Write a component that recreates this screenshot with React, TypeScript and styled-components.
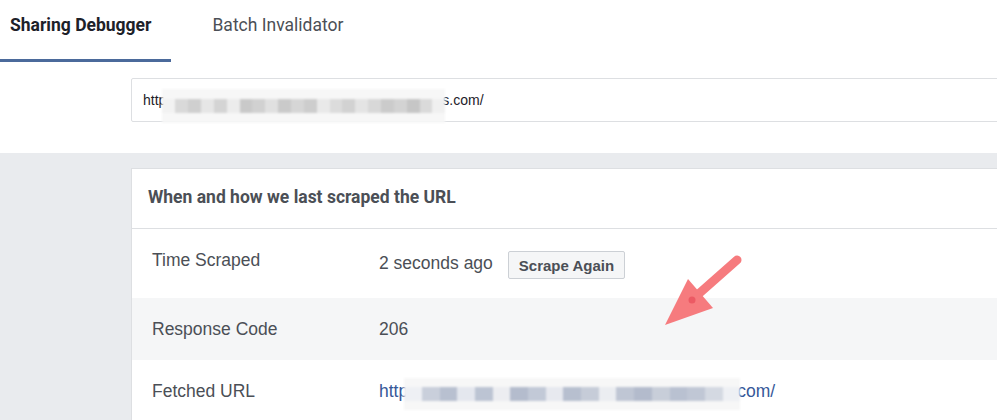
import React from 'react';
import styled, { createGlobalStyle } from 'styled-components';

const GlobalStyle = createGlobalStyle`
  html, body {
    margin: 0;
    padding: 0;
    background: #fff;
    overflow: hidden;
  }
  body {
    font-family: 'Liberation Sans', Arial, sans-serif;
    color: #4b4f56;
  }
`;

const Page = styled.div`
  position: relative;
  width: 997px;
  height: 420px;
  overflow: hidden;
`;

const TabBar = styled.div`
  display: flex;
  gap: 21px;
  margin-left: -10px;
  height: 62px;
`;

const Tab = styled.div<{ $active?: boolean }>`
  box-sizing: border-box;
  height: 62px;
  padding: 15px 20px 0;
  font-family: Roboto, 'Liberation Sans', sans-serif;
  font-size: 17.5px;
  line-height: 20px;
  font-weight: ${p => (p.$active ? 700 : 400)};
  color: ${p => (p.$active ? '#1d2129' : '#4b4f56')};
  border-bottom: 3px solid ${p => (p.$active ? '#4b6a9b' : 'transparent')};
`;

const UrlSection = styled.div`
  padding: 16px 0 31px 131px;
`;

const UrlInput = styled.div`
  box-sizing: border-box;
  height: 44px;
  margin-right: -10px;
  padding: 0 11px;
  display: flex;
  align-items: center;
  border: 1px solid #dddfe2;
  border-radius: 2px;
  font-size: 14px;
  color: #1d2129;
  white-space: nowrap;
`;

const Main = styled.div`
  background: #e9ebee;
  padding: 15px 0 0 131px;
  min-height: 260px;
`;

const Card = styled.div`
  background: #fff;
  border: 1px solid #dddfe2;
  border-right: none;
  margin-right: -10px;
`;

const CardHeader = styled.div`
  box-sizing: border-box;
  height: 60px;
  padding: 0 16px 4px;
  display: flex;
  align-items: center;
  font-family: Roboto, 'Liberation Sans', sans-serif;
  font-size: 17.5px;
  font-weight: 700;
  color: #4b4f56;
  border-bottom: 1px solid #dddfe2;
`;

const Row = styled.div<{ $shaded?: boolean }>`
  box-sizing: border-box;
  display: grid;
  grid-template-columns: 227px 1fr;
  align-items: center;
  padding: 0 20px;
  min-height: ${p => (p.$shaded ? 62 : 61)}px;
  background: ${p => (p.$shaded ? '#f5f6f7' : '#fff')};
  font-size: 17.5px;
  line-height: 20px;
`;

const TallRow = styled(Row)`
  min-height: 69px;
  align-items: start;
  padding-top: 21px;
`;

const Label = styled.div`
  color: #4b4f56;
`;

const Value = styled.div`
  display: flex;
  align-items: center;
  gap: 15px;
  color: #4b4f56;
  white-space: nowrap;
`;

const TimeValue = styled(Value)`
  margin-top: -3px;
`;

const Link = styled.span`
  color: #365899;
  display: flex;
  align-items: center;
`;

const Button = styled.button`
  height: 28px;
  margin-top: 4px;
  padding: 0 10px;
  font-family: 'Liberation Sans', Arial, sans-serif;
  font-size: 15px;
  font-weight: 700;
  color: #4b4f56;
  background: #f5f6f7;
  border: 1px solid #ccd0d5;
  border-radius: 2px;
`;

const BlurBox = styled.span<{ $w: number; $h: number }>`
  display: inline-flex;
  align-items: center;
  width: ${p => p.$w}px;
  height: ${p => p.$h}px;
  margin-left: -4px;
  margin-right: -3px;
  background: #f7f7f7;
  filter: blur(0.8px);
  position: relative;
  z-index: 1;
`;

const Cell = styled.span<{ $c: string }>`
  flex: 1;
  height: 14px;
  background: ${p => p.$c};
`;

const Blur = ({ w, h, colors, offsetY = 0 }: { w: number; h: number; colors: string[]; offsetY?: number }) => (
  <BlurBox $w={w} $h={h} style={{ transform: `translateY(${offsetY}px)` }}>
    {colors.map((c, i) => (
      <Cell key={i} $c={c} />
    ))}
  </BlurBox>
);

const inputCells = [
  '#f2f2f2', '#d9d9d9', '#cfcfcf', '#e6e6e6', '#d4d4d4', '#ececec', '#c9c9c9', '#d1d1d1',
  '#e0e0e0', '#cacaca', '#d6d6d6', '#cdcdcd', '#e9e9e9', '#dcdcdc', '#d2d2d2', '#e4e4e4',
  '#d8d8d8', '#cbcbcb', '#d3d3d3', '#c6c6c6', '#dadada', '#f0f0f0',
];

const urlCells = [
  '#eef0f4', '#c9cfdb', '#b8c0d0', '#e4e7ee', '#bcc4d3', '#ecedf1', '#b4bccd', '#c2c9d7',
  '#e7e9ef', '#b7bfcf', '#c6ccd8', '#ebedf1', '#bfc6d4', '#b3bbcc', '#c8ced9', '#b9c1d1',
  '#c0c7d5', '#d4d9e2', '#eef0f4',
];

const ArrowSvg = styled.svg`
  position: absolute;
  left: 650px;
  top: 245px;
  pointer-events: none;
`;

const Arrow = () => (
  <ArrowSvg width="100" height="95" viewBox="650 245 100 95">
    <line x1="737" y1="260" x2="694" y2="298" stroke="#f67b7e" strokeWidth="9" strokeLinecap="round" />
    <polygon points="665,325 688,279 713,308" fill="#f67b7e" />
    <circle cx="692" cy="300" r="3.5" fill="#ec5a64" />
  </ArrowSvg>
);

export default function App() {
  return (
    <Page>
      <GlobalStyle />
      <TabBar>
        <Tab $active>Sharing Debugger</Tab>
        <Tab>Batch Invalidator</Tab>
      </TabBar>
      <UrlSection>
        <UrlInput>
          http
          <Blur w={283} h={34} colors={inputCells} offsetY={6} />
          s.com/
        </UrlInput>
      </UrlSection>
      <Main>
        <Card>
          <CardHeader>When and how we last scraped the URL</CardHeader>
          <TallRow>
            <Label>Time Scraped</Label>
            <TimeValue>
              2 seconds ago
              <Button>Scrape Again</Button>
            </TimeValue>
          </TallRow>
          <Row $shaded>
            <Label>Response Code</Label>
            <Value>206</Value>
          </Row>
          <Row>
            <Label>Fetched URL</Label>
            <Value>
              <Link>
                http
                <Blur w={336} h={32} colors={urlCells} offsetY={3} />
                com/
              </Link>
            </Value>
          </Row>
        </Card>
      </Main>
      <Arrow />
    </Page>
  );
}
